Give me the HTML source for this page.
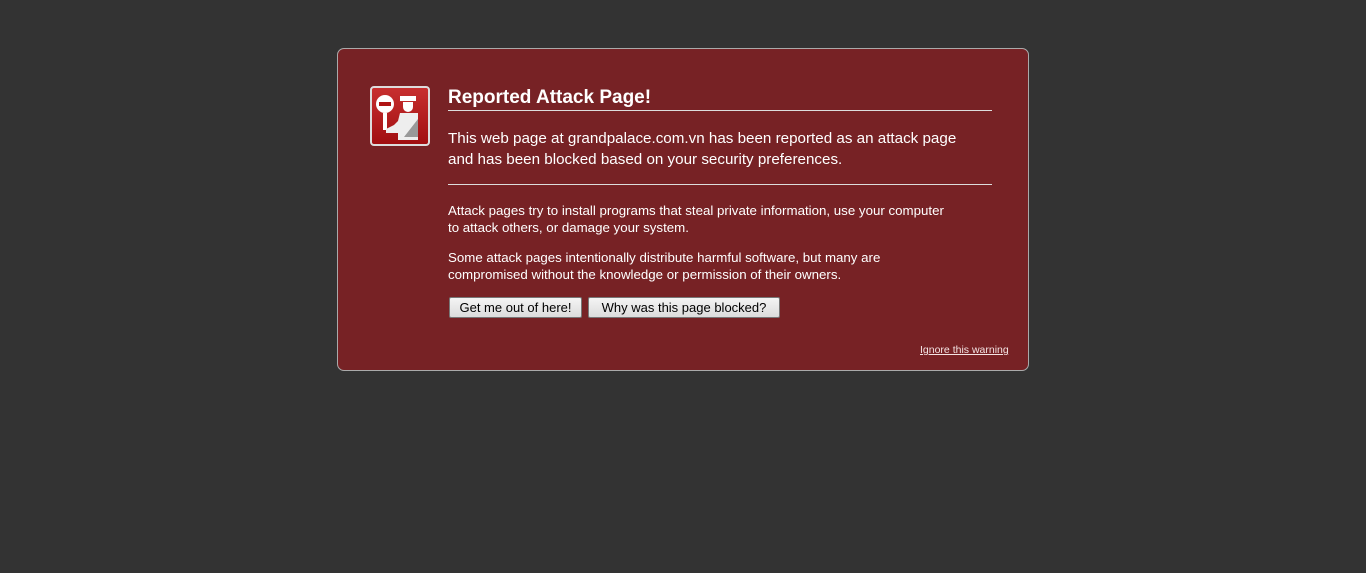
<!DOCTYPE html>
<html><head><style>
body{margin:0;background:#333;width:1366px;height:573px;overflow:hidden;font-family:"Liberation Sans",sans-serif;}
.box{position:absolute;left:337px;top:48px;width:690px;height:321px;background:#772225;border:1px solid #aaa;border-radius:7px;}
.t{position:absolute;color:#fff;white-space:nowrap}
.btn{position:absolute;top:297px;height:19px;border:1px solid #777;border-radius:2px;background:linear-gradient(#f4f4f4,#dcdcdc);font-size:13px;color:#000;text-align:center;line-height:19px;}
</style></head><body>
<div class="box"></div>
<svg style="position:absolute;left:370px;top:86px" width="60" height="60" viewBox="0 0 60 60">
<defs><linearGradient id="g" x1="0" y1="0" x2="0" y2="1"><stop offset="0" stop-color="#c83030"/><stop offset="1" stop-color="#a00e10"/></linearGradient></defs>
<rect x="1" y="1" width="58" height="58" rx="3" fill="url(#g)" stroke="#ddd" stroke-width="2"/>
<circle cx="15" cy="18" r="9" fill="#fff"/><rect x="9" y="16" width="12" height="4" fill="#b01515"/>
<rect x="13" y="27" width="4" height="17" fill="#fff"/>
<path d="M30 10h16v5h-16z" fill="#fff"/>
<path d="M33 16h10v5a5 5 0 0 1-10 0z" fill="#fff"/>
<path d="M30 27h18v27h-20v-7h-6l-6 0v-4l8-4 4-4z" fill="#eee"/>
<path d="M48 33v18h-14z" fill="#999"/>
</svg>
<div class="t" style="left:448px;top:87px;font-size:19px;font-weight:bold">Reported Attack Page!</div>
<div style="position:absolute;left:448px;top:110px;width:544px;height:1px;background:#ddd"></div>
<div class="t" style="left:448px;top:128px;font-size:15.2px;line-height:21px">This web page at grandpalace.com.vn has been reported as an attack page<br>and has been blocked based on your security preferences.</div>
<div style="position:absolute;left:448px;top:184px;width:544px;height:1px;background:#ddd"></div>
<div class="t" style="left:448px;top:202px;font-size:13.3px;line-height:17px">Attack pages try to install programs that steal private information, use your computer<br>to attack others, or damage your system.</div>
<div class="t" style="left:448px;top:249px;font-size:13.3px;line-height:17px">Some attack pages intentionally distribute harmful software, but many are<br>compromised without the knowledge or permission of their owners.</div>
<div class="btn" style="left:449px;width:131px">Get me out of here!</div>
<div class="btn" style="left:588px;width:190px">Why was this page blocked?</div>
<div class="t" style="left:920px;top:344px;font-size:10.5px;text-decoration:underline;color:#f4e4e4">Ignore this warning</div>
</body></html>
